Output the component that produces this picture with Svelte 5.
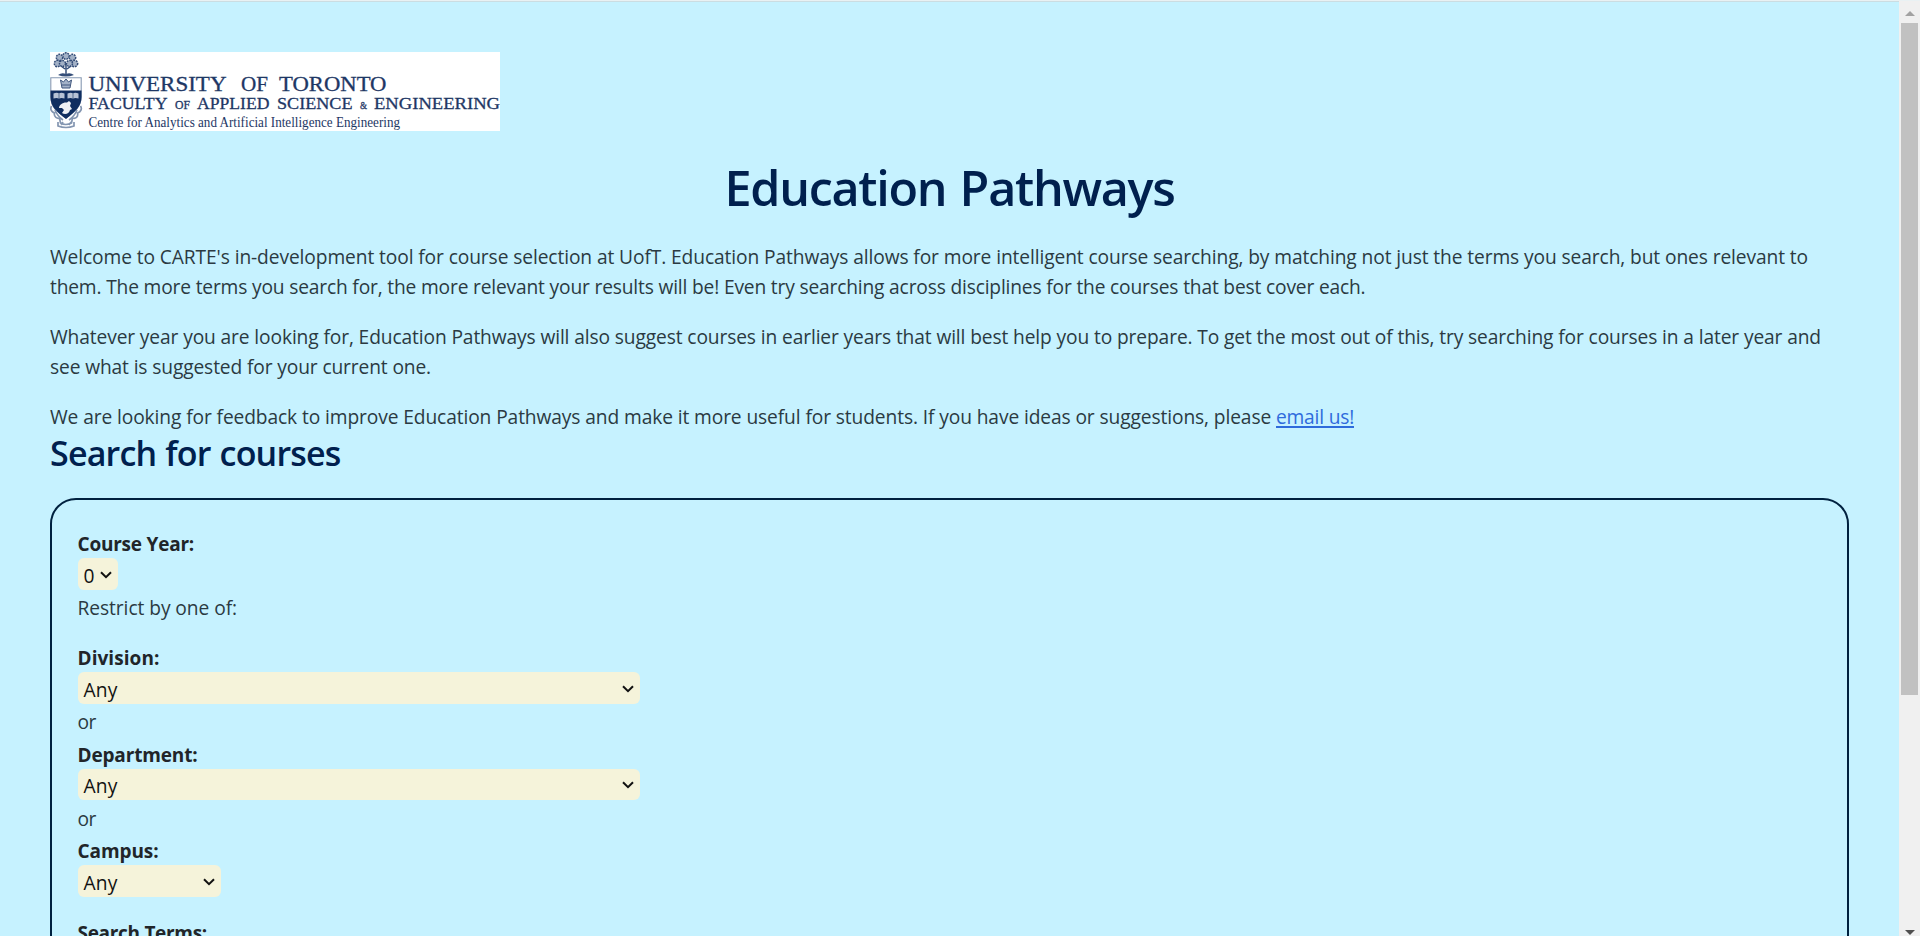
<script>
  // Spread the tracking of a line so that it fills the given measure.
  function measure(node, width) {
    const natural = node.getBoundingClientRect().width;
    const gaps = node.textContent.length;
    node.style.letterSpacing = `${(width - natural) / gaps}px`;
  }

  const paragraphs = [
    [
      { text: "Welcome to CARTE's in-development tool for course selection at UofT. Education Pathways allows for more intelligent course searching, by matching not just the terms you search, but ones relevant to", width: 1758 },
      { text: 'them. The more terms you search for, the more relevant your results will be! Even try searching across disciplines for the courses that best cover each.', width: 1315.5 },
    ],
    [
      { text: 'Whatever year you are looking for, Education Pathways will also suggest courses in earlier years that will best help you to prepare. To get the most out of this, try searching for courses in a later year and', width: 1771 },
      { text: 'see what is suggested for your current one.', width: 381 },
    ],
  ];
</script>

{#snippet chevron()}
  <svg class="chevron" viewBox="0 0 12 8"><path d="M1 1.2 6 6.2l5-5" /></svg>
{/snippet}

{#snippet word(text, x, y, width, size)}
  <text {x} {y} font-size={size} textLength={width} lengthAdjust="spacingAndGlyphs">{text}</text>
{/snippet}

<div class="window">
  <main>
    <svg class="logo" viewBox="0 0 450 79">
      <rect width="450" height="79" fill="#fff" />
      <g class="crest">
        <g fill="#a3b1c6" stroke="#344d78" stroke-width="1.5" stroke-dasharray="1.8 .9">
          <circle cx="16" cy="4" r="3.2" />
          <circle cx="9.5" cy="5.5" r="3.2" />
          <circle cx="22.5" cy="5.5" r="3.2" />
          <circle cx="7.5" cy="11.5" r="3.2" />
          <circle cx="24.5" cy="11.5" r="3.2" />
          <circle cx="12.5" cy="11.5" r="3" />
          <circle cx="19.5" cy="11.5" r="3" />
        </g>
        <path d="M16 11v11M15 17l-4-3m6 3 4-3" stroke="#344d78" stroke-width="1.5" fill="none" />
        <path d="M8 23q4-3 8-1 4-2 8 1-8 3-16 0" fill="#344d78" />
        <path d="M.8 25.7h30.4V45c0 10-7 15-15.2 21C7 60 .8 55 .8 45z" fill="#fff" stroke="#8799b3" stroke-width="1.1" />
        <path d="M.5 38.5h31V45c0 10-7 15-15.500 22C7 60 .5 55 .5 45z" fill="#102e60" />
        <path d="m10.5 28 3 2 2.500-3 2.500 3 3-2-1.500 8h-8z" fill="#a4b2c8" stroke="#40577e" />
        <path d="M12 33h8" stroke="#40577e" />
        <path d="M3.500 41.500q3.500-1.500 5.500 0 2-1.500 5.500 0v5q-3-1-5.500 0-2.500-1-5.500 0zM17.500 41.500q3.500-1.500 5.500 0 2-1.500 5.500 0v5q-3-1-5.500 0-2.500-1-5.500 0z" fill="#b7c3d6" />
        <path d="M9 41.500v5m14-5v5" stroke="#405a83" stroke-width=".8" />
        <path d="M9 56c0-3 4-6 8-5.500l2-1.500 2 2-1 3 2 3-2 1c-1 4-5 5-8 3l2-3-2-2z" fill="#edf0f5" />
        <path d="M1.500 54c-2 4 1 6 3 7-1 4 3 6 5 5l1 5q5 3 11 0l1-5c3 1 6-1 5-5 3-1 5-4 3-7M5 58c2 5 5 8 8 10m14-10c-2 5-5 8-8 10M8 70v4q8 3 16 0v-4M11 73l2-3m6 3 2-3" fill="none" stroke="#8395b0" stroke-width="1.7" />
      </g>
      <g class="wordmark">
        {@render word('UNIVERSITY', 38.5, 38.7, 138, 20.5)}
        {@render word('OF', 191, 38.7, 27, 20.5)}
        {@render word('TORONTO', 229, 38.7, 107.5, 20.5)}
        {@render word('FACULTY', 38.5, 57, 79, 17)}
        {@render word('OF', 125, 57, 15, 11.5)}
        {@render word('APPLIED', 147, 57, 72.5, 17)}
        {@render word('SCIENCE', 227, 57, 75.5, 17)}
        {@render word('&', 310, 57, 7, 10)}
        {@render word('ENGINEERING', 324, 57, 126, 17)}
      </g>
      <g class="centre">
        {@render word('Centre for Analytics and Artificial Intelligence Engineering', 38.5, 75, 311.5, 14.5)}
      </g>
    </svg>

    <h1><span use:measure={450}>Education Pathways</span></h1>

    {#each paragraphs as lines}
      <p>
        {#each lines as line}
          <span class="line"><span use:measure={line.width}>{line.text}</span></span>
        {/each}
      </p>
    {/each}
    <p class="feedback">
      <span use:measure={1226}>We are looking for feedback to improve Education Pathways and make it more useful for students. If you have ideas or suggestions, please&nbsp;</span><a href="#email" use:measure={78}>email us!</a>
    </p>

    <h2><span use:measure={290.5}>Search for courses</span></h2>

    <form>
      <div class="text bold"><span use:measure={116.5}>Course Year:</span></div>
      <div class="select year"><span>0</span>{@render chevron()}</div>
      <div class="text restrict"><span use:measure={159.5}>Restrict by one of:</span></div>
      <div class="text bold"><span use:measure={82}>Division:</span></div>
      <div class="select wide"><span use:measure={34}>Any</span>{@render chevron()}</div>
      <div class="text or"><span use:measure={18.5}>or</span></div>
      <div class="text bold"><span use:measure={120}>Department:</span></div>
      <div class="select wide short"><span use:measure={34}>Any</span>{@render chevron()}</div>
      <div class="text or second"><span use:measure={18.5}>or</span></div>
      <div class="text bold"><span use:measure={81}>Campus:</span></div>
      <div class="select medium"><span use:measure={34}>Any</span>{@render chevron()}</div>
      <div class="text bold terms"><span use:measure={129.5}>Search Terms:</span></div>
    </form>
  </main>

  <aside>
    <svg viewBox="0 0 10 5"><path d="m0 5 5-5 5 5z" fill="#a2a2a2" /></svg>
    <div class="thumb"></div>
    <svg class="down" viewBox="0 0 10 5"><path d="m0 0 5 5 5-5z" fill="#505050" /></svg>
  </aside>
</div>

<style>
  :global(body) {
    margin: 0;
    overflow: hidden;
  }
  .window {
    box-sizing: border-box;
    display: flex;
    width: 1920px;
    height: 936px;
    overflow: hidden;
    border-top: 1px solid #e9f1f3;
    background: #c6f2ff;
    color: #2b3a42;
    font: 19.2px/30px 'Open Sans', 'Noto Sans', sans-serif;
    box-shadow: inset 0 1px #cbdde2;
  }
  main {
    flex: 1;
    min-width: 0;
    padding: 51px 50px 0;
  }
  .logo {
    display: block;
    width: 450px;
    height: 79px;
  }
  .wordmark,
  .centre {
    font-family: 'Liberation Serif', serif;
    fill: #1e3765;
    stroke: #1e3765;
    stroke-width: 0.3px;
  }
  .centre {
    stroke-width: 0;
  }
  h1,
  h2,
  p {
    margin: 0;
    white-space: nowrap;
  }
  h1 span,
  h2 span,
  p span,
  a,
  .text span,
  .select span {
    display: inline-block;
    white-space: nowrap;
  }
  h1 {
    margin-top: 26px;
    height: 85px;
    text-align: center;
    color: #00204e;
    font-size: 48.5px;
    font-weight: 550;
    line-height: 60px;
    word-spacing: 2px;
  }
  p {
    margin-bottom: 20px;
  }
  .line {
    display: block;
    height: 30px;
  }
  p.feedback {
    margin: 0;
  }
  a {
    color: #2e6bdc;
    text-decoration: underline;
    text-decoration-thickness: 2px;
    text-underline-offset: 2px;
  }
  h2 {
    height: 66px;
    color: #00204e;
    font-size: 34px;
    font-weight: 550;
    line-height: 42px;
    word-spacing: 1px;
  }
  form {
    box-sizing: border-box;
    width: 1799px;
    height: 600px;
    padding: 29px 25.5px;
    border: 2px solid #00213f;
    border-radius: 26px;
  }
  .text {
    height: 30px;
  }
  .bold {
    color: #212529;
    font-weight: 700;
    font-size: 19px;
  }
  .select {
    display: flex;
    box-sizing: border-box;
    align-items: flex-start;
    justify-content: space-between;
    height: 32px;
    margin-top: -1px;
    padding: 3px 6px;
    border-radius: 6px;
    background: #f5f3da;
    color: #111;
  }
  .chevron {
    width: 12px;
    height: 8px;
    margin-top: 10px;
    fill: none;
    stroke: #111;
    stroke-width: 2;
  }
  .year {
    width: 40.5px;
  }
  .wide {
    width: 562.5px;
  }
  .medium {
    width: 143.5px;
  }
  .short {
    height: 31px;
    padding-top: 2px;
  }
  .restrict {
    margin: 3px 0 20px;
  }
  .or {
    margin: 3px 0;
  }
  .second {
    margin-top: 4px;
    margin-bottom: 2px;
  }
  .terms {
    margin-top: 21px;
  }
  aside {
    display: flex;
    flex-direction: column;
    align-items: center;
    width: 21px;
    padding-top: 10px;
    background: #f0f0f0;
  }
  aside svg {
    width: 10px;
    height: 5px;
  }
  .thumb {
    width: 17px;
    height: 672px;
    margin-top: 7px;
    background: #c1c1c1;
  }
  .down {
    margin-top: 235px;
  }
</style>
